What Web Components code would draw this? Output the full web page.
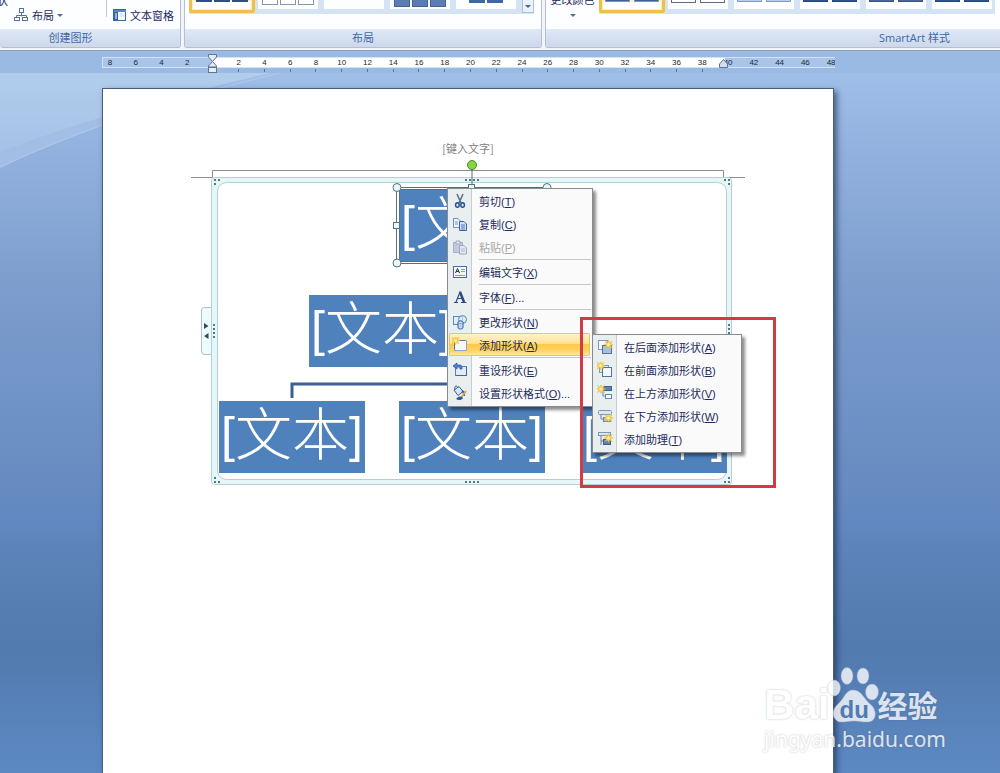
<!DOCTYPE html>
<html lang="zh-CN">
<head>
<meta charset="UTF-8">
<meta name="viewport" content="width=device-width, initial-scale=1">
<title>SmartArt</title>
<style>
  body {
    margin: 0;
    font-family: "Liberation Sans", "Noto Sans CJK SC", sans-serif;
    font-size: 11px;
    color: #1c2a5e;
  }
</style>
</head>
<body>
<word-app>
  <word-ribbon slot="ribbon">
    <ribbon-group class="create" label="创建图形">
      <ribbon-create></ribbon-create>
    </ribbon-group>
    <ribbon-group class="layout" label="布局">
      <thumb-gallery kind="layout"></thumb-gallery>
    </ribbon-group>
    <ribbon-group class="styles" label="SmartArt 样式">
      <color-button>更改颜色</color-button>
      <thumb-gallery kind="style"></thumb-gallery>
    </ribbon-group>
  </word-ribbon>

  <word-ruler slot="ruler"></word-ruler>

  <word-page>
    <span slot="header">[键入文字]</span>
    <smart-frame></smart-frame>
    <smart-node x="296" y="101">文本</smart-node>
    <smart-node x="206" y="206">文本</smart-node>
    <smart-node x="116" y="312">文本</smart-node>
    <smart-node x="296" y="312">文本</smart-node>
    <smart-node x="478" y="312">文本</smart-node>
    <smart-handles></smart-handles>

    <context-menu x="344" y="99" width="146">
      <menu-item icon="cut">剪切(<u>T</u>)</menu-item>
      <menu-item icon="copy">复制(<u>C</u>)</menu-item>
      <menu-item icon="paste" disabled>粘贴(<u>P</u>)</menu-item>
      <menu-line></menu-line>
      <menu-item icon="edit">编辑文字(<u>X</u>)</menu-item>
      <menu-line></menu-line>
      <menu-item icon="font">字体(<u>F</u>)...</menu-item>
      <menu-line></menu-line>
      <menu-item icon="change">更改形状(<u>N</u>)</menu-item>
      <menu-item icon="add" active>添加形状(<u>A</u>)</menu-item>
      <menu-line></menu-line>
      <menu-item icon="reset">重设形状(<u>E</u>)</menu-item>
      <menu-item icon="format">设置形状格式(<u>O</u>)...</menu-item>
    </context-menu>

    <context-menu x="489" y="245" width="150">
      <menu-item icon="after">在后面添加形状(<u>A</u>)</menu-item>
      <menu-item icon="before">在前面添加形状(<u>B</u>)</menu-item>
      <menu-item icon="above">在上方添加形状(<u>V</u>)</menu-item>
      <menu-item icon="below">在下方添加形状(<u>W</u>)</menu-item>
      <menu-item icon="assist">添加助理(<u>T</u>)</menu-item>
    </context-menu>

    <red-marker></red-marker>
  </word-page>

  <site-watermark slot="overlay"></site-watermark>
</word-app>

<script>
const star = (x, y) => `
  <g transform="translate(${x} ${y})">
    <path d="M0-4.5L1-1.5L3.5-3.5L2-0.8L4.5 0L2 1L3.5 3.5L0.8 2L0 4.5L-1 2L-3.5 3.5L-2 1L-4.5 0L-2-1L-3.5-3.5L-1-1.5Z" fill="#ffd84e" stroke="#e3b43a" stroke-width=".5"/>
    <circle r="1.2" fill="#fff6b8"/>
  </g>`;

const ICONS = {
  cut: `<path d="M5 1L9 10M11 1L7 10" stroke="#5b7194" stroke-width="1.6" fill="none"/>
    <ellipse cx="5.4" cy="12" rx="1.8" ry="2.3" fill="none" stroke="#24509a" stroke-width="1.5"/>
    <ellipse cx="10.6" cy="12" rx="1.8" ry="2.3" fill="none" stroke="#24509a" stroke-width="1.5"/>`,
  copy: `<path d="M1.500 2.500H6L8.500 5V11.500H1.500Z" fill="#eaf2ff" stroke="#6f8fc0"/>
    <path d="M3 6H6M3 8H6" stroke="#6f93cc"/>
    <path d="M7.500 5.500H12L14.500 8V14.500H7.500Z" fill="#cfe0f8" stroke="#3f65a0"/>
    <path d="M9 9H13M9 11H13M9 13H13" stroke="#4c7bc0"/>`,
  paste: `<path d="M1.500 3.500H10.500V13.500H1.500Z" fill="#b9c3d8" stroke="#96a1bc"/>
    <path d="M4 2H8V5H4Z" fill="#e5e9f2" stroke="#8e9ab7"/>
    <path d="M7.500 6.500H12L14.500 9V15H7.500Z" fill="#e2e8f3" stroke="#8b98b8"/>
    <path d="M9 10H13M9 12H13" stroke="#a0acc8"/>`,
  edit: `<rect x="1.500" y="2.500" width="13" height="11" fill="#f2f7ff" stroke="#4d6c98"/>
    <path d="M3.500 9L5.500 4.500L7.500 9M4.200 7.500H6.800" stroke="#1f2f50" fill="none"/>
    <path d="M9 5.500H13M9 7.500H13M3 11.500H13" stroke="#7da0d2"/>`,
  font: `<path d="M2 13.500H6M9 13.500H14.500M4 13L8 3L12 13M5.500 9.500H10" stroke="#2c4c80" stroke-width="1.200" fill="none"/>
    <path d="M8 3L12 13" stroke="#2c4c80" stroke-width="2.500"/>`,
  change: `<rect x="1.500" y="2.500" width="9" height="8" fill="#e2edfb" stroke="#5b87bb"/>
    <circle cx="10.500" cy="5.500" r="4" fill="#d9e8fa" fill-opacity=".7" stroke="#5b87bb"/>
    <path d="M6 8V13.500C6 15.500 11 15.500 11 13.500V8C11 6.500 6 6.500 6 8Z" fill="#bcd3f1" stroke="#2f5d9c"/>
    <ellipse cx="8.500" cy="8.200" rx="2.500" ry="1" fill="#f4f9ff" stroke="#2f5d9c" stroke-width=".6"/>`,
  add: `<rect x="2.500" y="3.500" width="12" height="10" rx="1" fill="#f6faff" stroke="#5875a2"/>
    <path d="M4 13.500H14.500V5" stroke="#89a8d4" fill="none"/>${star(3.5, 3.5)}`,
  reset: `<rect x="3.500" y="4.500" width="11" height="9" fill="#dfeafa" stroke="#5f7fae"/>
    <path d="M4 13.500H14.500V5" stroke="#3f659f" fill="none"/>
    <path d="M1 4L5 1V3H8C10 3 10 5 10 7H8C8 5 7.500 5 5 5V7Z" fill="#4e84d6" stroke="#244f98" stroke-width=".7"/>`,
  format: `<path d="M2 5L7 1.500L11 6.500L6 10.500Z" fill="#d8e5f7" stroke="#425c86"/>
    <path d="M3 5C2 0 5 0 6 3" fill="none" stroke="#425c86"/>
    <path d="M10 6C13 7 12 9 12 11" stroke="#2b62b5" stroke-width="2" fill="none"/>
    <path d="M14 6L9 13" stroke="#dba849" stroke-width="2"/>
    <path d="M4 14C7 11 9 11 11 13C9 16 6 15 4 14Z" fill="#31558f"/>`,
  after: `<rect x="1.500" y="1.500" width="9" height="9" fill="#f4f8ff" stroke="#7f98bd"/>
    <rect x="5.500" y="6.500" width="9" height="8" fill="#a9bfe0" stroke="#54719f"/>${star(11.5, 5.5)}`,
  before: `<rect x="2.500" y="3.500" width="9" height="7" fill="#dce7f7" stroke="#7f98bd"/>
    <rect x="5.500" y="5.500" width="9" height="9" fill="#f3f8ff" stroke="#54719f"/>${star(3.5, 3.5)}`,
  above: `<path d="M6 6V11H9" stroke="#6681a8" fill="none"/>
    <rect x="6.500" y="1.500" width="8" height="4" fill="#5e80b9" stroke="#435f90"/>
    <rect x="8.500" y="9.500" width="6" height="4" fill="#f4f9ff" stroke="#6786b4"/>${star(4, 4)}`,
  below: `<path d="M4 6V11H8" stroke="#6681a8" fill="none"/>
    <rect x="1.500" y="2.500" width="13" height="4" rx="1" fill="#dce7f5" stroke="#7e96b8"/>
    <rect x="6.500" y="9.500" width="7" height="4" fill="#a9bfe0" stroke="#6786b4"/>${star(11.5, 10)}`,
  assist: `<path d="M4 5V14M4 10H8" stroke="#6681a8" fill="none"/>
    <rect x="1.500" y="1.500" width="12" height="3" fill="#dce7f5" stroke="#7e96b8"/>
    <rect x="6.500" y="8.500" width="7" height="5" fill="#5e80b9" stroke="#435f90"/>${star(11.5, 7)}`
};

// small base: every element only supplies its markup
class Base extends HTMLElement {
  constructor() {
    super();
    this.attachShadow({ mode: "open" });
  }

  connectedCallback() {
    this.shadowRoot.innerHTML = this.html();
  }

  get place() {
    return `left: ${this.getAttribute("x")}px; top: ${this.getAttribute("y")}px;`;
  }
}

customElements.define("word-app", class extends Base {
  html() {
    return `
      <style>
        :host {
          display: flex;
          flex-direction: column;
          height: 100vh;
          position: relative;
          overflow: hidden;
        }
        main {
          flex: 1;
          display: flex;
          position: relative;
          min-height: 0;
          padding: 15px 166px 0 102px;
          background: linear-gradient(#9fbfe9, #92b1de 11%, #7b9ccc 32%,
            #6b8fc3 54%, #6087bf 65%, #5e85bb 67%, #517aae 82%, #5d89c3);
        }
        .swoosh { position: absolute; left: 0; top: 0; }
        ::slotted(word-page) { flex: 1; }
      </style>
      <slot name="ribbon"></slot>
      <slot name="ruler"></slot>
      <main>
        <svg class="swoosh" width="280" height="100" aria-hidden="true">
          <defs>
            <linearGradient id="s" x1="0" y1="0" x2="0" y2="1">
              <stop offset="0" stop-color="#b2cdec"/>
              <stop offset="1" stop-color="#a5c2e7"/>
            </linearGradient>
          </defs>
          <path d="M0 95Q120 38 280 0H0Z" fill="#a2bee4"/>
          <path d="M0 94Q120 38 280 0" fill="none" stroke="#b0c9ea"/>
          <path d="M0 79Q100 40 270 0H0Z" fill="url(#s)"/>
        </svg>
        <slot></slot>
      </main>
      <slot name="overlay"></slot>
    `;
  }
});

customElements.define("word-ribbon", class extends Base {
  html() {
    return `
      <style>
        :host {
          display: flex;
          gap: 3px;
          height: 48px;
          flex: none;
          padding-bottom: 2px;
          overflow: hidden;
          background: #f1f5fb;
          border-bottom: 1px solid #8ba1c0;
        }
        ::slotted(.create) { flex: 0 0 181px; }
        ::slotted(.layout) { flex: 0 0 358px; }
        ::slotted(.styles) { flex: 0 0 739px; }
      </style>
      <slot></slot>
    `;
  }
});

customElements.define("ribbon-group", class extends Base {
  html() {
    return `
      <style>
        :host {
          display: flex;
          flex-direction: column;
          box-sizing: border-box;
          background: #fdfeff;
          border: 1px solid #b4bfd2;
          border-top: 0;
          border-radius: 0 0 3px 3px;
          overflow: hidden;
        }
        .body { display: flex; height: 29px; }
        .label {
          flex: 1;
          line-height: 18px;
          text-align: center;
          color: #3d69a8;
          font-family: "Open Sans", "Noto Sans CJK SC", sans-serif;
          background: linear-gradient(#dfe8f6, #ced8ec);
        }
        :host(.create) { border-left: 0; }
        :host(.create) .label { text-indent: -39px; }
      </style>
      <div class="body"><slot></slot></div>
      <div class="label">${this.getAttribute("label")}</div>
    `;
  }
});

customElements.define("ribbon-create", class extends Base {
  html() {
    return `
      <style>
        :host { display: flex; flex: 1; }
        .left { width: 106px; border-right: 1px solid #c3c9d4; height: 17px; }
        .cut { height: 7px; line-height: 2px; margin-left: -3px; }
        button {
          display: flex;
          align-items: center;
          gap: 3px;
          height: 16px;
          padding: 0;
          border: 0;
          background: none;
          font: inherit;
          color: inherit;
        }
        .left button { margin-left: 14px; }
        .right { padding: 7px 0 0 6px; }
        i { border: 3px solid transparent; border-top-color: #5d6b86; border-bottom: 0; }
      </style>
      <div class="left">
        <div class="cut">状</div>
        <button>
          <svg width="15" height="14" viewBox="0 0 15 14" fill="#fff" stroke="#56729c">
            <path d="M7.500 5V8.500M2.500 9V7.500H12.500V9" fill="none"/>
            <rect x="5.500" y=".5" width="4" height="4"/>
            <rect x=".5" y="9.500" width="5" height="3"/>
            <rect x="8.500" y="9.500" width="5" height="3"/>
          </svg>
          布局 <i></i>
        </button>
      </div>
      <div class="right">
        <button>
          <svg width="14" height="14" viewBox="0 0 14 14">
            <rect x=".5" y="1.500" width="12" height="11" fill="#f4f9ff" stroke="#3f6498"/>
            <path d="M1 3H13" stroke="#5e86bd" stroke-width="2"/>
            <rect x="1" y="4" width="4" height="8" fill="#2f66b2"/>
            <path d="M2 6H4M2 8H4M2 10H4" stroke="#fff"/>
            <path d="M7 6H11M7 8H11" stroke="#c7d7ec"/>
          </svg>
          文本窗格
        </button>
      </div>
    `;
  }
});

customElements.define("color-button", class extends Base {
  html() {
    return `
      <style>
        :host { display: block; width: 53px; flex: none; }
        button {
          display: flex;
          flex-direction: column;
          align-items: center;
          gap: 8px;
          width: 53px;
          height: 29px;
          padding: 0;
          border: 0;
          background: none;
          font: inherit;
          color: inherit;
        }
        span { height: 6px; line-height: 0; }
        i { border: 3px solid transparent; border-top-color: #5d6b86; border-bottom: 0; }
      </style>
      <button><span><slot></slot></span><i></i></button>
    `;
  }
});

customElements.define("thumb-gallery", class extends Base {
  html() {
    const sets = {
      layout: [
        "n3 h2 #31507f #31507f on",
        "n3 h5 #fff #8b94a5",
        "n0 h5 #fff #fff",
        "n3 h7 #5a7db5 #45648f",
        "n2 h3 #3f67a4 #3f67a4"
      ],
      style: [
        "n2 h2 #3b619c #8296b5 on",
        "n2 h3 #fff #5f6b80",
        "n2 h2 #b7cbea #7f9dc9",
        "n2 h2 #2d568f #234777",
        "n2 h2 #4d6796 #3c5583",
        "n2 h2 #2d568f #234777"
      ]
    };
    const kind = this.getAttribute("kind");
    const thumbs = sets[kind].map((s, i) => {
      const [n, h, fill, line, on] = s.split(" ");
      const bars = `<b style="height:${h.slice(1)}px;background:${fill};border-color:${line}"></b>`;
      return `<button class="${on || ""}" aria-label="${i + 1}">${bars.repeat(+n.slice(1))}</button>`;
    }).join("");
    return `
      <style>
        :host {
          display: flex;
          box-sizing: border-box;
          height: 14px;
          margin-left: ${kind === "layout" ? 4 : 0}px;
          background: #d5e4f5;
        }
        button {
          display: flex;
          justify-content: center;
          gap: 2px;
          width: 60px;
          height: 9px;
          margin: 0 3px;
          padding: 0;
          border: 0;
          background: #fdfeff;
        }
        button.on {
          box-sizing: border-box;
          width: 66px;
          height: 13px;
          margin: 0;
          border: 3px solid #efc14b;
          border-top: 0;
          border-radius: 0 0 3px 3px;
          box-shadow: inset 0 0 0 1px #fff0b0;
        }
        b { box-sizing: border-box; width: ${kind === "layout" ? 16 : 25}px; border: 1px solid; border-top: 0; }
        :host([kind="style"]) button { gap: 4px; }
        .drop { width: 12px; height: 13px; margin: 0 0 0 3px; align-items: center; background: #e9f1fb; border: 1px solid #a8bfdd; border-top: 0; }
        .drop i { border: 3px solid transparent; border-top-color: #48658f; border-bottom: 0; }
      </style>
      ${thumbs}
      ${kind === "layout" ? `<button class="drop" aria-label="其他"><i></i></button>` : ""}
    `;
  }
});

customElements.define("word-ruler", class extends Base {
  html() {
    let cells = "";
    for (let n = -8; n <= 48; n += 2) {
      cells += `<span class="${n > 0 && n < 40 ? "tick" : ""}">${n ? Math.abs(n) : ""}</span>`;
    }
    return `
      <style>
        :host {
          display: block;
          flex: none;
          height: 16px;
          padding: 6px 165px 0 102px;
          background: #9bbae3;
        }
        .bar { position: relative; }
        .scale {
          overflow: hidden;
          background: linear-gradient(90deg, #a9c5ea 15%, #fff 15%, #fff 85%, #a9c5ea 85%) 0 0 / 100% 11px no-repeat;
        }
        .cells {
          display: grid;
          grid-template-columns: repeat(29, 1fr);
          height: 15px;
          margin: 0 -9px 0 -5px;
          font-size: 8px;
          line-height: 11px;
          text-align: center;
          color: #202835;
        }
        .tick::after {
          content: "";
          display: block;
          width: 1px;
          height: 3px;
          margin: 1px auto 0;
          background: #5b7399;
        }
        .edge {
          position: absolute;
          inset: 0 0 auto 0;
          height: 11px;
          box-sizing: border-box;
          border: 1px solid #d3e2f6;
          border-right: 0;
        }
        svg { position: absolute; top: -3px; }
        .start { left: 15%; margin-left: -4px; }
        .end { left: 85%; margin-left: -6px; top: 2px; }
      </style>
      <div class="bar">
        <div class="scale"><div class="cells">${cells}</div></div>
        <div class="edge"></div>
        <svg class="start" width="9" height="20" fill="#e4edf8" stroke="#60738f">
          <path d="M.5 .5H8.500V3L4.500 7.500L.5 3Z"/>
          <path d="M4.500 7.500L8.500 12V13H.5V12Z"/>
          <rect x=".5" y="13.500" width="8" height="5"/>
        </svg>
        <svg class="end" width="9" height="10" fill="#cfdef1" stroke="#60738f">
          <path d="M4.500 .5L8.500 5V8.500H.5V5Z"/>
        </svg>
      </div>
    `;
  }
});

customElements.define("word-page", class extends Base {
  html() {
    return `
      <style>
        :host {
          display: block;
          position: relative;
          background: #fff;
          border: 1px solid #4c5d7b;
          border-bottom: 0;
          box-shadow: 3px 3px 6px rgba(25, 45, 85, 0.65);
        }
        header {
          padding-top: 51px;
          line-height: 16px;
          font-family: "Noto Sans CJK SC", sans-serif;
          text-align: center;
          color: #808080;
        }
      </style>
      <header><slot name="header"></slot></header>
      <slot></slot>
    `;
  }
});

customElements.define("smart-frame", class extends Base {
  html() {
    return `
      <style>
        :host { position: absolute; left: 0; top: 0; }
      </style>
      <svg width="700" height="420" viewBox="103 89 700 420" fill="none" aria-hidden="true">
        <path d="M191 177.500H212.500V170.500H723.500V177.500H745" stroke="#8c8c8c"/>
        <path d="M211 307.500H204Q201.500 307.500 201.500 310V351Q201.500 354.500 204 354.500H211" fill="#eefafb" stroke="#a9c4cb"/>
        <rect x="211.500" y="177.500" width="520" height="307" rx="3" fill="#e6f7f9" stroke="#b4d0d6"/>
        <rect x="217.500" y="182.500" width="509" height="297" rx="9" fill="#fff" stroke="#b4d0d6"/>
        <path d="M204 323L208.500 326L204 329ZM208.500 333V339L204 336Z" fill="#1f5360"/>
        <g fill="#5b7680">
          <path d="M465 179h2v2h-2zM469 179h2v2h-2zM473 179h2v2h-2zM477 179h2v2h-2z"/>
          <path d="M465 481h2v2h-2zM469 481h2v2h-2zM473 481h2v2h-2zM477 481h2v2h-2z"/>
          <path d="M213 324h2v2h-2zM213 328h2v2h-2zM213 332h2v2h-2zM213 336h2v2h-2z"/>
          <path d="M728 324h2v2h-2zM728 328h2v2h-2zM728 332h2v2h-2zM728 336h2v2h-2z"/>
          <path d="M214 179h2v2h-2zM218 179h2v2h-2zM214 183h2v2h-2z"/>
          <path d="M724 179h2v2h-2zM728 179h2v2h-2zM728 183h2v2h-2z"/>
          <path d="M214 477h2v2h-2zM214 481h2v2h-2zM218 481h2v2h-2z"/>
          <path d="M728 477h2v2h-2zM728 481h2v2h-2zM724 481h2v2h-2z"/>
        </g>
        <path d="M292 398V384H472V398" stroke="#3b5f93" stroke-width="3"/>
      </svg>
    `;
  }
});

customElements.define("smart-node", class extends Base {
  html() {
    return `
      <style>
        :host {
          position: absolute;
          ${this.place}
          display: flex;
          justify-content: center;
          width: 146px;
          height: 72px;
          background: #4f81bd;
          color: #fff;
          font-size: 57px;
          font-weight: 300;
          line-height: 68px;
          white-space: nowrap;
        }
        b { font-size: 50px; }
      </style>
      <b>[</b><slot></slot><b>]</b>
    `;
  }
});

customElements.define("smart-handles", class extends Base {
  html() {
    return `
      <style>
        :host { position: absolute; left: 0; top: 0; }
      </style>
      <svg width="500" height="200" viewBox="103 89 500 200" fill="#e9f7fa" stroke="#55717c" aria-hidden="true">
        <rect x="398" y="188.500" width="149" height="74" fill="none" stroke="#fff" stroke-width="3"/>
        <rect x="396.500" y="187.500" width="151" height="76" fill="none"/>
        <rect x="399.500" y="189.500" width="146" height="72" fill="none"/>
        <path d="M472 169V184"/>
        <circle cx="472" cy="165" r="4.500" fill="#83d63f" stroke="#4b8a30"/>
        <circle cx="397" cy="187.500" r="4"/>
        <circle cx="547" cy="187.500" r="4"/>
        <circle cx="397" cy="263" r="4"/>
        <rect x="393.500" y="222.500" width="6" height="6"/>
        <rect x="468.500" y="184.500" width="6" height="6"/>
      </svg>
    `;
  }
});

customElements.define("context-menu", class extends Base {
  html() {
    return `
      <style>
        :host {
          position: absolute;
          ${this.place}
          box-sizing: border-box;
          width: ${this.getAttribute("width")}px;
          padding-bottom: 2px;
          border: 1px solid #868a91;
          background: linear-gradient(90deg, #e9eeef 23px, #c5cdd2 23px, #c5cdd2 24px, #fafafa 24px);
          box-shadow: 3px 3px 3px rgba(0, 0, 0, 0.45);
        }
      </style>
      <slot></slot>
    `;
  }
});

customElements.define("menu-item", class extends Base {
  html() {
    return `
      <style>
        :host { display: block; height: 23px; }
        button {
          display: flex;
          align-items: center;
          gap: 11px;
          width: 100%;
          height: 23px;
          padding: 0 0 0 4px;
          border: 0;
          background: none;
          font: inherit;
          color: inherit;
          white-space: nowrap;
        }
        svg { flex: none; }
        :host([active]) { box-sizing: border-box; padding: 0 2px 0 1px; }
        :host([active]) button {
          padding-left: 3px;
          border-radius: 2px;
          box-shadow: inset 0 0 0 1px #f0c560;
          background: linear-gradient(#fff3cd, #ffe297 45%, #ffc94a 50%, #ffd362 75%, #ffeaa5);
        }
        button:disabled { color: #a6a6a6; }
        button:disabled svg { opacity: 0.8; }
      </style>
      <button${this.hasAttribute("disabled") ? " disabled" : ""}>
        <svg width="16" height="16" viewBox="0 0 16 16" aria-hidden="true">${ICONS[this.getAttribute("icon")]}</svg>
        <span><slot></slot></span>
      </button>
    `;
  }
});

customElements.define("menu-line", class extends Base {
  html() {
    return `
      <style>
        :host { display: block; height: 1px; margin: 1px 1px 0 31px; background: #c3c6cb; }
      </style>
    `;
  }
});

customElements.define("red-marker", class extends Base {
  html() {
    return `
      <style>
        :host {
          position: absolute;
          left: 477px;
          top: 228px;
          box-sizing: border-box;
          width: 196px;
          height: 171px;
          border: 3px solid #d03c44;
          pointer-events: none;
        }
      </style>
    `;
  }
});

customElements.define("site-watermark", class extends Base {
  html() {
    return `
      <style>
        :host {
          position: absolute;
          right: 54px;
          bottom: 20px;
          color: #fff;
          opacity: 0.78;
          text-shadow: 0 0 2px rgba(90, 90, 90, 0.5);
          pointer-events: none;
        }
        .row { display: flex; align-items: flex-end; height: 60px; font-weight: 700; }
        .bai { font-size: 42px; line-height: 40px; }
        .paw { position: relative; width: 50px; height: 60px; margin-left: -2px; }
        .du { position: absolute; left: 12px; bottom: 3px; font-size: 24px; line-height: 24px; color: #517aae; text-shadow: none; }
        .cn { font-size: 30px; line-height: 36px; }
        .url { font-family: "Noto Sans", sans-serif; font-size: 21px; line-height: 28px; }
      </style>
      <div class="row">
        <span class="bai">Bai</span>
        <span class="paw">
          <svg width="50" height="60" viewBox="828 665 50 60" fill="#fff" stroke="#aab4c4" stroke-width=".5" style="overflow:visible">
            <ellipse cx="848" cy="676" rx="6" ry="8.500"/>
            <ellipse cx="864" cy="676" rx="6" ry="8"/>
            <ellipse cx="835" cy="688" rx="6.500" ry="8"/>
            <ellipse cx="873" cy="692" rx="6.500" ry="8"/>
            <path d="M854 690C862 690 864 697 870 703C877 708 878 716 874 720C870 724 862 721 855 721C848 721 841 724 837 720C832 715 834 708 840 703C846 697 847 690 854 690Z"/>
          </svg>
          <span class="du">du</span>
        </span>
        <span class="cn">经验</span>
      </div>
      <div class="url">jingyan.baidu.com</div>
    `;
  }
});
</script>
</body>
</html>
